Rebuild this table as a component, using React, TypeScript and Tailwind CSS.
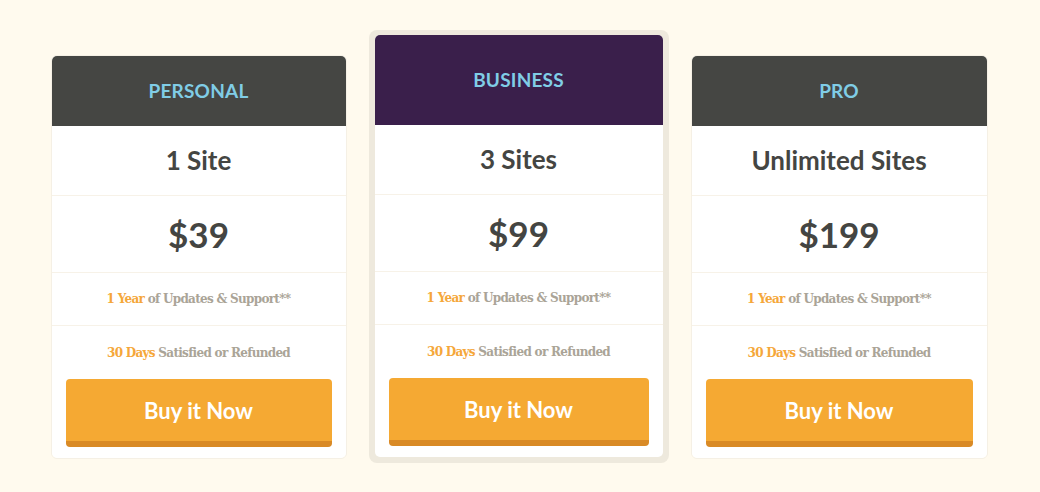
const plans = [
  { name: 'PERSONAL', sites: '1 Site', price: '$39', featured: false },
  { name: 'BUSINESS', sites: '3 Sites', price: '$99', featured: true },
  { name: 'PRO', sites: 'Unlimited Sites', price: '$199', featured: false },
];

const sans = { fontFamily: 'Lato, "Noto Sans", sans-serif' };
const serif = { fontFamily: '"DejaVu Serif", "Liberation Serif", serif' };

function PlanCard({ plan }: { plan: (typeof plans)[number] }) {
  return (
    <div className="flex flex-col bg-white rounded-[5px] overflow-hidden">
      <div
        className={`flex items-center justify-center ${
          plan.featured ? 'h-[90px] bg-[#3a1f4b]' : 'h-[70px] bg-[#454643]'
        }`}
      >
        <span className="text-[19px] font-bold text-[#80cde6] tracking-[0.2px]" style={sans}>
          {plan.name}
        </span>
      </div>
      <div className="h-[70px] flex items-center justify-center border-b border-[#f7f2e8]">
        <span className="text-[26px] font-bold text-[#444542]" style={sans}>
          {plan.sites}
        </span>
      </div>
      <div className="h-[77px] flex items-center justify-center border-b border-[#f7f2e8]">
        <span className="text-[35px] font-bold text-[#444542]" style={sans}>
          {plan.price}
        </span>
      </div>
      <div className="h-[53px] flex items-center justify-center border-b border-[#f7f2e8]">
        <span className="text-[12px] font-bold text-[#aaa497] tracking-[-0.7px]" style={serif}>
          <span className="text-[#f5a73a]">1 Year</span> of Updates &amp; Support**
        </span>
      </div>
      <div className="h-[53px] flex items-center justify-center">
        <span className="text-[12px] font-bold text-[#aaa497] tracking-[-0.7px]" style={serif}>
          <span className="text-[#f5a73a]">30 Days</span> Satisfied or Refunded
        </span>
      </div>
      <div className="px-[14px] pb-[11px]">
        <button
          className="w-full h-[68px] rounded-[4px] bg-[#f5a933] border-b-[6px] border-[#d98a26] text-white text-[22px] font-bold flex items-center justify-center"
          style={sans}
        >
          Buy it Now
        </button>
      </div>
    </div>
  );
}

export default function App() {
  return (
    <div className="w-[1040px] h-[492px] bg-[#fffaee] flex justify-center items-start gap-[22px] pt-[30px] pr-[2px]">
      <div className="w-[296px] mt-[25px] border border-[#f5f0e5] rounded-[6px]">
        <PlanCard plan={plans[0]} />
      </div>
      <div className="w-[300px] p-[6px] pt-[5px] bg-[#eee9dd] rounded-[8px]">
        <PlanCard plan={plans[1]} />
      </div>
      <div className="w-[297px] mt-[25px] border border-[#f5f0e5] rounded-[6px]">
        <PlanCard plan={plans[2]} />
      </div>
    </div>
  );
}
